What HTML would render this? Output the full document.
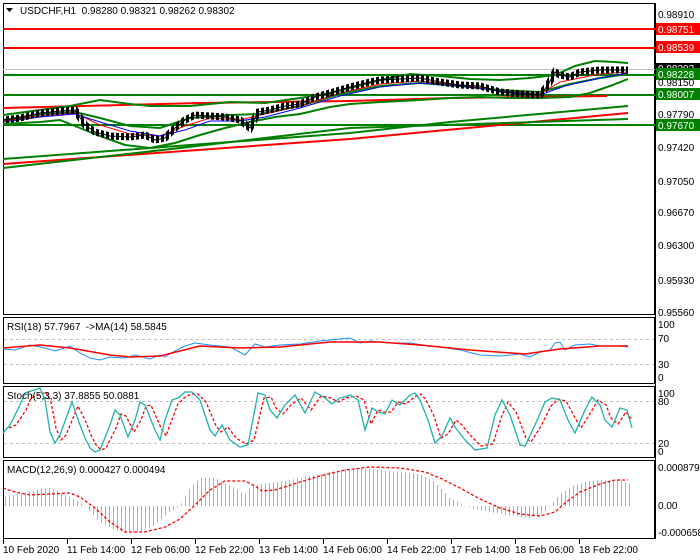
<!DOCTYPE html>
<html><head><meta charset="utf-8"><style>
html,body{margin:0;padding:0;background:#fff;}
svg{display:block;font-family:"Liberation Sans",sans-serif;}
text{font-size:10px;fill:#000;}
</style></head><body>
<svg width="700" height="560" viewBox="0 0 700 560" xmlns="http://www.w3.org/2000/svg">
<defs>
<pattern id="hist" width="4" height="10" patternUnits="userSpaceOnUse"><rect x="1" y="0" width="1" height="10" fill="#b0b0b0"/></pattern>
<pattern id="cand" width="5" height="6" patternUnits="userSpaceOnUse"><rect x="1" y="0" width="3" height="6" fill="#000"/></pattern>
<clipPath id="cm"><rect x="3" y="3" width="652" height="312"/></clipPath>
</defs>
<rect width="700" height="560" fill="#fff"/>
<rect x="3.5" y="3.5" width="651" height="311" fill="none" stroke="#000"/>
<rect x="3.5" y="317.5" width="651" height="66" fill="none" stroke="#000"/>
<rect x="3.5" y="386.5" width="651" height="71" fill="none" stroke="#000"/>
<rect x="3.5" y="460.5" width="651" height="78" fill="none" stroke="#000"/>

<g clip-path="url(#cm)">
<line x1="3" y1="29" x2="655" y2="29" stroke="#f00" stroke-width="2"/>
<line x1="3" y1="48" x2="655" y2="48" stroke="#f00" stroke-width="2"/>
<line x1="3" y1="69.5" x2="655" y2="69.5" stroke="#c0c0c0" stroke-width="1"/>
<line x1="3" y1="75" x2="655" y2="75" stroke="#008000" stroke-width="2"/>
<line x1="3" y1="95" x2="655" y2="95" stroke="#008000" stroke-width="2"/>
<line x1="3" y1="125" x2="655" y2="125" stroke="#008000" stroke-width="2"/>
<polyline points="3,108 200,103 350,101 450,98 607,96" fill="none" stroke="#f00" stroke-width="2"/>
<polyline points="3,164 350,139 628,113" fill="none" stroke="#f00" stroke-width="2"/>
<polyline points="3,159 350,133 450,122 628,106" fill="none" stroke="#008000" stroke-width="2"/>
<polyline points="3,168 180,148 350,128 628,119" fill="none" stroke="#008000" stroke-width="2"/>
<polyline points="3,115 40,110 70,106 100,100 130,104 150,106 190,106 230,102 265,103 300,98 330,93 350,88 380,80 410,74 440,76 470,79 500,80 530,78 555,75 575,66 595,61 615,62 628,63" fill="none" stroke="#008000" stroke-width="2"/>
<polyline points="3,124 40,122 60,120 80,128 100,136 125,145 150,148 175,143 200,135 225,128 250,122 275,117 300,114 330,107 350,104 380,102 420,100 450,98 480,97 510,98 540,98 570,97 590,93 610,86 628,79" fill="none" stroke="#008000" stroke-width="2"/>
<polyline points="3,120 40,114 75,112 100,118 130,126 160,128 190,118 230,115 260,114 300,106 340,94 380,86 420,83 460,86 500,90 540,92 570,84 600,78 628,74" fill="none" stroke="#008000" stroke-width="2"/>
<polyline points="3,121 40,116 75,113 100,125 130,134 160,136 185,126 210,118 240,120 265,114 300,106 340,93 380,84 420,81 460,85 500,91 540,94 560,82 600,74 628,72" fill="none" stroke="#f00" stroke-width="1"/>
<polyline points="3,122 40,117 75,114 100,122 130,131 160,136 185,130 210,121 240,121 265,117 300,108 340,96 380,87 420,83 460,86 500,91 540,95 565,86 600,78 628,73" fill="none" stroke="#00f" stroke-width="1"/>
<polyline points="3,120 20,118 40,113 60,111 75,110 85,125 95,132 110,136 130,137 145,135 155,140 165,138 175,128 185,120 195,115 210,116 225,117 240,120 250,128 258,112 270,110 285,106 300,104 315,97 330,93 350,87 370,82 380,80 400,79 420,78 440,82 460,85 480,86 500,92 520,94 540,95 548,85 555,72 560,75 570,77 580,72 600,70 628,70" fill="none" stroke="url(#cand)" stroke-width="7"/>
<polyline points="3,120 20,118 40,113 60,111 75,110 85,125 95,132 110,136 130,137 145,135 155,140 165,138 175,128 185,120 195,115 210,116 225,117 240,120 250,128 258,112 270,110 285,106 300,104 315,97 330,93 350,87 370,82 380,80 400,79 420,78 440,82 460,85 480,86 500,92 520,94 540,95 548,85 555,72 560,75 570,77 580,72 600,70 628,70" fill="none" stroke="#000" stroke-width="1"/>
</g>

<text x="20" y="14">USDCHF,H1&#160;&#160;0.98280 0.98321 0.98262 0.98302</text>
<polygon points="6,8 13,8 9.5,12" fill="#000"/>

<g>
<text x="658" y="18">0.98910</text>
<rect x="656" y="23" width="44" height="12" fill="#f00"/><text x="658" y="33" style="fill:#fff">0.98751</text>
<rect x="656" y="41" width="44" height="12" fill="#f00"/><text x="658" y="51" style="fill:#fff">0.98539</text>
<rect x="656" y="63" width="44" height="11" fill="#000"/><text x="658" y="72" style="fill:#fff">0.98302</text>
<rect x="656" y="68" width="44" height="12" fill="#008000"/><text x="658" y="78" style="fill:#fff">0.98228</text>
<text x="658" y="86">0.98150</text>
<rect x="656" y="88" width="44" height="12" fill="#008000"/><text x="658" y="98" style="fill:#fff">0.98007</text>
<text x="658" y="118">0.97790</text>
<rect x="656" y="119" width="44" height="12" fill="#008000"/><text x="658" y="129" style="fill:#fff">0.97670</text>
<text x="658" y="151">0.97420</text>
<text x="658" y="185">0.97050</text>
<text x="658" y="216">0.96670</text>
<text x="658" y="249">0.96300</text>
<text x="658" y="284">0.95930</text>
<text x="658" y="316">0.95560</text>
</g>

<line x1="4" y1="339.5" x2="654" y2="339.5" stroke="#c0c0c0" stroke-dasharray="3 3"/>
<line x1="4" y1="364.5" x2="654" y2="364.5" stroke="#c0c0c0" stroke-dasharray="3 3"/>
<polyline points="3,349 15,350 30,345 45,348 55,351 70,346 80,353 90,358 100,360 110,357 125,358 135,355 150,359 160,355 165,357 175,351 185,346 195,343 210,345 230,347 245,355 255,344 265,347 280,345 300,344 320,341 340,339 350,338 360,343 370,341 390,343 410,343 430,346 440,347 460,350 480,355 500,356 520,354 530,357 540,352 550,350 555,343 560,342 565,350 575,345 590,344 600,346 620,346 628,347" fill="none" stroke="#1e90ff" stroke-width="1"/>
<polyline points="3,348 40,345 70,348 110,355 130,357 160,356 200,346 240,348 280,347 330,342 380,342 420,345 470,350 525,354 560,349 600,346 628,346" fill="none" stroke="#f00" stroke-width="1.5"/>
<text x="7" y="330">RSI(18) 57.7967&#160;&#160;-&gt;MA(14) 58.5845</text>
<text x="658" y="328">100</text><text x="658" y="342">70</text><text x="658" y="368">30</text><text x="658" y="381">0</text>

<line x1="4" y1="401.5" x2="654" y2="401.5" stroke="#c0c0c0" stroke-dasharray="3 3"/>
<line x1="4" y1="443.5" x2="654" y2="443.5" stroke="#c0c0c0" stroke-dasharray="3 3"/>
<polyline points="9,428 16,425 26,410 31,398 46,392 51,402 56,428 61,440 66,435 78,406 86,422 91,435 96,445 101,450 106,448 116,428 121,414 126,416 134,432 141,420 146,406 151,405 161,428 166,436 171,422 178,404 184,398 191,394 198,394 206,402 216,426 221,432 228,427 236,438 246,444 254,440 264,398 271,397 276,408 283,414 291,405 301,398 311,410 321,396 331,398 338,402 346,398 351,397 356,396 364,400 371,424 378,410 384,412 391,412 398,402 406,404 416,396 421,394 426,400 434,416 441,438 448,434 456,420 461,424 471,436 481,446 493,444 501,418 508,402 516,412 526,438 531,442 541,426 551,406 558,399 566,401 574,416 581,428 591,412 598,400 606,405 611,418 618,424 626,412 632,420" fill="none" stroke="#f00" stroke-width="1.3" stroke-dasharray="3 2"/>
<polyline points="3,433 10,425 20,405 25,393 40,388 45,400 50,432 55,443 60,435 72,402 80,425 85,438 90,448 95,452 100,450 110,425 115,410 120,415 128,437 135,420 140,402 145,405 155,430 160,440 165,420 172,400 178,398 185,392 192,392 200,400 210,430 215,436 222,425 230,440 240,447 248,445 258,393 265,395 270,410 277,418 285,405 295,395 305,413 315,392 325,398 332,404 340,398 345,397 350,395 358,400 365,430 372,408 378,412 385,414 392,400 400,405 410,395 415,393 420,400 428,420 435,443 442,436 450,418 455,427 465,440 475,450 487,448 495,415 502,400 510,415 520,445 525,446 535,425 545,402 552,398 560,400 568,420 575,433 585,410 592,397 600,405 605,420 612,427 620,408 627,410 632,428" fill="none" stroke="#20b2aa" stroke-width="1.3"/>
<text x="7" y="399">Stoch(5,3,3) 37.8855 50.0881</text>
<text x="658" y="397">100</text><text x="658" y="405">80</text><text x="658" y="447">20</text><text x="658" y="455">0</text>

<polygon points="5,506 5,496 20,494 40,489 50,488 60,492 70,497 80,502 85,506 100,522 115,530 125,533 140,532 155,525 170,512 180,506 190,488 200,478 215,478 235,488 245,495 252,485 270,483 290,480 320,474 340,470 360,468 380,470 400,472 420,474 435,482 450,498 465,506 480,510 500,514 515,516 530,518 545,512 550,506 560,494 575,485 590,481 605,480 620,480 630,484 630,506" fill="url(#hist)"/>
<polyline points="3,488 15,492 30,495 50,494 70,493 80,497 95,508 110,522 125,532 145,532 165,527 180,519 195,505 210,490 225,481 245,481 255,486 262,491 275,490 300,482 320,476 345,470 370,467 400,468 425,472 440,478 460,488 480,499 500,508 520,514 540,516 555,512 565,503 580,492 600,484 615,480 628,480" fill="none" stroke="#f00" stroke-width="1.3" stroke-dasharray="3 2"/>
<text x="7" y="473">MACD(12,26,9) 0.000427 0.000494</text>
<text x="658" y="471">0.000879</text><text x="658" y="509">0.00</text><text x="658" y="536">-0.000658</text>

<g stroke="#000">
<line x1="3.5" y1="539" x2="3.5" y2="544"/><line x1="67.5" y1="539" x2="67.5" y2="544"/><line x1="131.5" y1="539" x2="131.5" y2="544"/><line x1="195.5" y1="539" x2="195.5" y2="544"/><line x1="259.5" y1="539" x2="259.5" y2="544"/><line x1="323.5" y1="539" x2="323.5" y2="544"/><line x1="387.5" y1="539" x2="387.5" y2="544"/><line x1="451.5" y1="539" x2="451.5" y2="544"/><line x1="515.5" y1="539" x2="515.5" y2="544"/><line x1="579.5" y1="539" x2="579.5" y2="544"/>
<line x1="655.5" y1="3" x2="655.5" y2="539"/>
</g>
<text x="3" y="553">10 Feb 2020</text>
<text x="67" y="553">11 Feb 14:00</text>
<text x="131" y="553">12 Feb 06:00</text>
<text x="195" y="553">12 Feb 22:00</text>
<text x="259" y="553">13 Feb 14:00</text>
<text x="323" y="553">14 Feb 06:00</text>
<text x="387" y="553">14 Feb 22:00</text>
<text x="451" y="553">17 Feb 14:00</text>
<text x="515" y="553">18 Feb 06:00</text>
<text x="579" y="553">18 Feb 22:00</text>
</svg>
</body></html>
